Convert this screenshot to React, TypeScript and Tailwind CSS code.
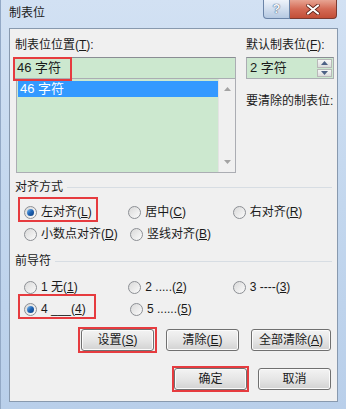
import React from 'react';

function Radio({ checked }: { checked?: boolean }) {
  return (
    <span className="relative w-[13px] h-[13px] rounded-full border border-[#8c8f94] bg-gradient-to-br from-[#d9d9d9] to-[#fbfbfb] flex items-center justify-center shrink-0">
      {checked && (
        <span className="w-[7px] h-[7px] rounded-full bg-gradient-to-br from-[#7fc0f0] via-[#1e63b4] to-[#0c3f80]" />
      )}
    </span>
  );
}

function Opt({ label, checked, boxed, boxW }: { label: React.ReactNode; checked?: boolean; boxed?: boolean; boxW?: string }) {
  return (
    <div className="relative w-[106px] h-[22px] flex items-center gap-[4px]">
      <Radio checked={checked} />
      <span className="leading-[16px]">{label}</span>
      {boxed && (
        <div className={`absolute left-[-6px] top-[-4px] h-[25px] border-2 border-[#e63b3f] ${boxW}`} />
      )}
    </div>
  );
}

function Btn({ children, w }: { children: React.ReactNode; w: string }) {
  return (
    <div className={`${w} h-[22px] rounded-[3px] border border-[#707070] bg-gradient-to-b from-[#f3f3f3] via-[#e6e6e6] to-[#d2d2d2] flex items-center justify-center shadow-[inset_0_0_0_1px_#fbfbfb]`}>
      {children}
    </div>
  );
}

function Group({ title }: { title: string }) {
  return (
    <div className="flex items-center gap-[4px] pl-[5px] pr-[5px] h-[16px]">
      <span className="leading-[16px]">{title}</span>
      <div className="flex-1 h-px bg-[#d7dde3]" />
    </div>
  );
}

export default function App() {
  return (
    <div className="w-[346px] h-[409px] bg-gradient-to-b from-[#d2e1f3] via-[#c3d7ee] to-[#b9cfea] flex flex-col px-[8px] pb-[7px] border-l border-[#93a9c6] text-[12px] text-[#1a1a1a] font-['Liberation_Sans','Noto_Sans_CJK_SC',sans-serif] overflow-hidden">
      {/* title bar */}
      <div className="h-[28px] flex items-start justify-between shrink-0">
        <span className="pt-[5px] leading-[16px] text-[12px]">制表位</span>
        <div className="flex mr-[1px]">
          <div className="w-[27px] h-[19px] rounded-bl-[4px] border border-t-0 border-[#6b84a7] bg-gradient-to-b from-[#eef3fa] to-[#b5c9e2] flex items-center justify-center text-[13px] font-bold text-[#f4f7fb] [text-shadow:0_0_1px_#3b5170,0_0_1px_#3b5170]">
            ?
          </div>
          <div className="w-[47px] h-[19px] rounded-br-[4px] border border-t-0 border-l-0 border-[#7a3a31] bg-gradient-to-b from-[#e7a493] via-[#d46a55] to-[#c24e37] flex items-center justify-center">
            <svg width="14" height="11" viewBox="0 0 14 11">
              <path d="M2 1.5 L12 9.5 M12 1.5 L2 9.5" stroke="#5b2017" strokeWidth="3.6" strokeLinecap="round" />
              <path d="M2 1.5 L12 9.5 M12 1.5 L2 9.5" stroke="#ffffff" strokeWidth="2.2" strokeLinecap="round" />
            </svg>
          </div>
        </div>
      </div>

      {/* client area */}
      <div className="flex-1 bg-[#f0f0f0] border border-[#8899ae] flex flex-col pt-[8px]">
        {/* top section */}
        <div className="flex gap-[10px]">
          <div className="flex flex-col pl-[3px]">
            <span className="pl-[2px] leading-[16px]">制表位位置(<u>T</u>):</span>
            <div className="relative mt-[4px] w-[223px] h-[22px] border border-[#abadb3] border-t-[#8a8d94] bg-[#cce8cf] flex items-center pl-[3px] text-[13px]">
              46 字符
              <div className="absolute left-[-1px] top-[-1px] w-[59px] h-[24px] border-2 border-[#e63b3f]" />
            </div>
            <div className="ml-[3px] w-[220px] h-[94px] border border-t-0 border-[#abadb3] bg-[#cce8cf] flex">
              <div className="flex-1 pt-[2px] pl-[1px]">
                <div className="h-[16px] bg-[#3399ff] text-white text-[13px] leading-[16px] pl-[2px]">46 字符</div>
              </div>
              <div className="w-[17px] bg-[#f0f0f0] border-l border-[#e3e3e3] flex flex-col items-center justify-between py-[8px]">
                <svg width="7" height="4" viewBox="0 0 7 4"><path d="M0 4 L3.5 0 L7 4 Z" fill="#a3a3a3" /></svg>
                <svg width="7" height="4" viewBox="0 0 7 4"><path d="M0 0 L3.5 4 L7 0 Z" fill="#a3a3a3" /></svg>
              </div>
            </div>
          </div>
          <div className="flex flex-col">
            <span className="leading-[16px]">默认制表位(<u>F</u>):</span>
            <div className="mt-[4px] w-[88px] h-[22px] border border-[#abadb3] border-t-[#8a8d94] bg-[#cce8cf] flex items-center pl-[3px] text-[13px]">
              <span className="flex-1">2 字符</span>
              <div className="w-[15px] h-[18px] mr-[1px] flex flex-col gap-px">
                <div className="flex-1 border border-[#b8b8b8] bg-gradient-to-b from-[#f6f6f6] to-[#dcdcdc] flex items-center justify-center">
                  <svg width="7" height="4" viewBox="0 0 7 4"><path d="M0 4 L3.5 0 L7 4 Z" fill="#4d6185" /></svg>
                </div>
                <div className="flex-1 border border-[#b8b8b8] bg-gradient-to-b from-[#f6f6f6] to-[#dcdcdc] flex items-center justify-center">
                  <svg width="7" height="4" viewBox="0 0 7 4"><path d="M0 0 L3.5 4 L7 0 Z" fill="#4d6185" /></svg>
                </div>
              </div>
            </div>
            <span className="mt-[14px] leading-[16px] whitespace-nowrap">要清除的制表位:</span>
          </div>
        </div>

        {/* alignment */}
        <div className="mt-[6px]">
          <Group title="对齐方式" />
        </div>
        <div className="mt-[6px] pl-[14px] flex flex-col">
          <div className="flex">
            <Opt label={<>左对齐(<u>L</u>)</>} checked boxed boxW="w-[80px]" />
            <Opt label={<>居中(<u>C</u>)</>} />
            <Opt label={<>右对齐(<u>R</u>)</>} />
          </div>
          <div className="flex">
            <Opt label={<>小数点对齐(<u>D</u>)</>} />
            <Opt label={<>竖线对齐(<u>B</u>)</>} />
          </div>
        </div>

        {/* leader */}
        <div className="mt-[8px]">
          <Group title="前导符" />
        </div>
        <div className="mt-[7px] pl-[14px] flex flex-col">
          <div className="flex">
            <Opt label={<>1 无(<u>1</u>)</>} />
            <Opt label={<>2 .....(<u>2</u>)</>} />
            <Opt label={<>3 ----(<u>3</u>)</>} />
          </div>
          <div className="flex">
            <Opt label={<>4 ___(<u>4</u>)</>} checked boxed boxW="w-[78px]" />
            <Opt label={<>5 ......(<u>5</u>)</>} />
          </div>
        </div>

        {/* buttons */}
        <div className="mt-[9px] flex justify-end gap-[12px] pr-[6px]">
          <div className="relative">
            <Btn w="w-[73px]">设置(<u>S</u>)</Btn>
            <div className="absolute left-[-3px] top-[-2px] w-[79px] h-[26px] border-2 border-[#e63b3f]" />
          </div>
          <Btn w="w-[73px]">清除(<u>E</u>)</Btn>
          <Btn w="w-[80px]">全部清除(<u>A</u>)</Btn>
        </div>
        <div className="mt-[17px] flex justify-end gap-[11px] pr-[6px]">
          <div className="relative">
            <Btn w="w-[73px]">确定</Btn>
            <div className="absolute left-[-2px] top-[-2px] w-[77px] h-[26px] border-2 border-[#e63b3f]" />
          </div>
          <Btn w="w-[73px]">取消</Btn>
        </div>
      </div>
    </div>
  );
}
